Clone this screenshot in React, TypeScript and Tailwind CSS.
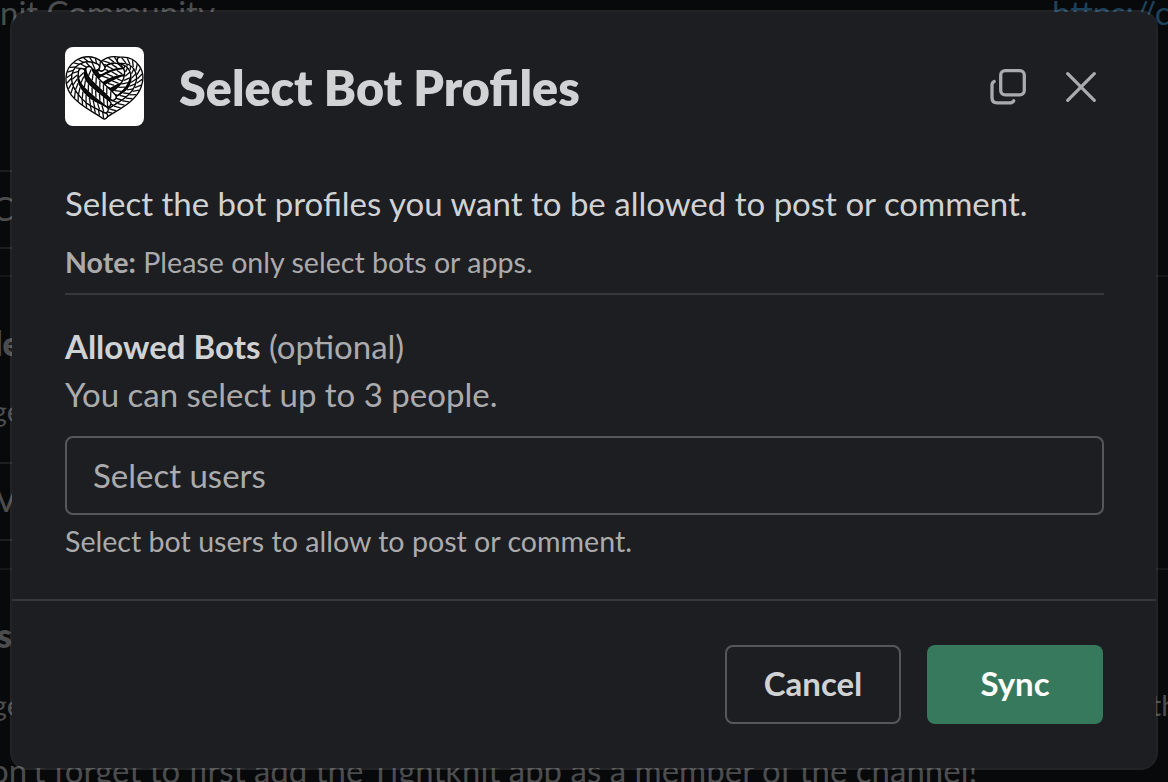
import React from "react";

type Pt = [number, number];

// Each strand is a chain of cubic Bézier control points.
const STRANDS: Pt[][] = [
  [[203, 84], [180, 84], [158, 92], [138, 104]],
  [[203, 104], [185, 106], [160, 114], [140, 128]],
  [[204, 126], [190, 130], [172, 140], [154, 150]],
  [[138, 92], [150, 66], [186, 62], [204, 78], [234, 104], [214, 150], [172, 174]],
  [[206, 74], [244, 88], [244, 134], [224, 160], [206, 182], [176, 190], [150, 212]],
  [[196, 70], [238, 66], [266, 104], [249, 148], [234, 188], [184, 210], [148, 234]],
  [[140, 92], [128, 66], [92, 62], [66, 80], [32, 104], [40, 146], [56, 168], [80, 200], [124, 218], [148, 236]],
  [[124, 90], [96, 76], [66, 88], [60, 114], [54, 146], [84, 178], [102, 192], [120, 204], [136, 210], [150, 218]],
  [[80, 104], [74, 132], [98, 150], [116, 166], [130, 178], [146, 190], [158, 200]],
  [[102, 98], [104, 120], [140, 144], [174, 180]],
];

const STEP = 15;

function sample(pts: Pt[], t: number, seg: number) {
  const [a, b, c, d] = pts.slice(seg * 3, seg * 3 + 4);
  const u = 1 - t;
  const at = (i: 0 | 1) => u * u * u * a[i] + 3 * u * u * t * b[i] + 3 * u * t * t * c[i] + t * t * t * d[i];
  const dt = (i: 0 | 1) => 3 * u * u * (b[i] - a[i]) + 6 * u * t * (c[i] - b[i]) + 3 * t * t * (d[i] - c[i]);
  const dx = dt(0);
  const dy = dt(1);
  const l = Math.hypot(dx, dy) || 1;
  return { x: at(0), y: at(1), tx: dx / l, ty: dy / l };
}

function twists(pts: Pt[]) {
  let out = "";
  let travelled = 6;
  let last: { x: number; y: number } | null = null;
  for (let s = 0; s < (pts.length - 1) / 3; s++) {
    for (let i = 0; i <= 60; i++) {
      const p = sample(pts, i / 60, s);
      if (last) travelled += Math.hypot(p.x - last.x, p.y - last.y);
      last = p;
      if (travelled >= STEP) {
        travelled -= STEP;
        const vx = -p.ty * 7.5 + p.tx * 7;
        const vy = p.tx * 7.5 + p.ty * 7;
        out += `M${p.x + vx} ${p.y + vy}L${p.x - vx} ${p.y - vy}`;
      }
    }
  }
  return out;
}

function toPath(pts: Pt[]) {
  return `M${pts[0].join(" ")}C${pts.slice(1).map((p) => p.join(" ")).join(" ")}`;
}

function RopeHeart() {
  return (
    <svg viewBox="30 30 237 237" className="size-[79px] shrink-0 rounded-lg bg-white" aria-hidden="true">
      <path d="M148 240C90 212 50 160 56 110C66 70 120 60 142 96C170 55 240 70 246 110C250 160 200 205 148 240Z" fill="#111" />
      {STRANDS.map((pts, i) => (
        <g key={i} fill="none">
          <path d={toPath(pts)} stroke="#000" strokeWidth="23" strokeLinecap="round" />
          <path d={toPath(pts)} stroke="#fff" strokeWidth="15" strokeLinecap="round" />
          <path d={twists(pts)} stroke="#111" strokeWidth="4" />
        </g>
      ))}
    </svg>
  );
}

function WindowIcon() {
  return (
    <svg width="36" height="36" viewBox="0 0 36 36" fill="none" stroke="#ababad" strokeWidth="3.3" strokeLinecap="round" aria-hidden="true">
      <rect x="10.7" y="1.7" width="23.6" height="24.1" rx="4.5" />
      <path d="M4.2 12.4C2.6 13.2 2 14.4 2 16V28.5C2 31.8 3.8 33.8 7 33.8H19.5C21.6 33.8 23 33 23.7 31.8" />
    </svg>
  );
}

function CloseIcon() {
  return (
    <svg width="30" height="30" viewBox="0 0 30 30" fill="none" stroke="#ababad" strokeWidth="3.2" strokeLinecap="round" aria-hidden="true">
      <path d="M1.7 1.7L28.3 28.3M28.3 1.7L1.7 28.3" />
    </svg>
  );
}

function Backdrop() {
  return (
    <div className="flex h-full flex-col whitespace-nowrap text-[33px] leading-[40px] text-[#4b4c4d]" aria-hidden="true">
      <div className="flex h-[170px] justify-between">
        <span className="-mt-[8px]">nit Community</span>
        <span className="-mt-[8px] w-[116px] text-[#1d425d]">https://community</span>
      </div>
      <div className="h-[79px] w-[200px] border-y-2 border-[#1d1e20] pt-[16px]">
        <span className="-ml-[8px]">C</span>
      </div>
      <div className="mt-[26px] h-[187px] border-t-2 border-[#151618] pt-[46px]">
        <div className="-ml-[6px] font-extrabold">le</div>
        <div className="-ml-[8px] mt-[28px] text-[28.6px]">ge</div>
      </div>
      <div className="h-[79px] w-[200px] border-y-2 border-[#1d1e20] pt-[15px]">
        <span className="-ml-[5px]">V</span>
      </div>
      <div className="mt-[27px] h-[214px] border-t-2 border-[#151618] pt-[45px]">
        <div className="-ml-[3px] font-extrabold">s</div>
        <div className="mt-[30px] flex justify-between text-[28.6px]">
          <span className="-ml-[8px]">ge</span>
          <span className="w-[17px]">the</span>
        </div>
        <div className="-ml-[10px] mt-[25px]">
          on't forget to first add the Tightknit app as a member of the channel!
        </div>
      </div>
    </div>
  );
}

export default function App() {
  return (
    <div className="relative h-[782px] w-[1168px] overflow-hidden bg-[#08090b] font-['Lato',sans-serif]">
      <Backdrop />
      <section
        role="dialog"
        className="absolute left-[10px] top-[10px] flex h-[760px] w-[1148px] flex-col rounded-[18px] border-2 border-[#e8e8e8]/12 bg-[#1d1e22] bg-clip-padding text-[#d1d2d3]"
      >
        <header className="flex h-[150px] items-start pl-[53px] pr-[60px] pt-[35px]">
          <RopeHeart />
          <h1 className="ml-[35px] mt-[10px] flex-1 text-[48.4px] font-extrabold leading-[60px]">Select Bot Profiles</h1>
          <div className="mt-[22px] flex items-center gap-[40px]">
            <WindowIcon />
            <CloseIcon />
          </div>
        </header>

        <div className="flex h-[437px] flex-col pl-[53px] pr-[52px] pt-[21px]">
          <p className="text-[33px] leading-[40px]">Select the bot profiles you want to be allowed to post or comment.</p>
          <p className="mt-[19px] text-[28.6px] leading-[40px] text-[#ababad]">
            <b className="font-bold">Note:</b> Please only select bots or apps.
          </p>
          <hr className="mt-[11px] border-t-2 border-[#35373b]" />
          <label className="mt-[31px] text-[33px] leading-[40px]">
            <b className="font-bold">Allowed Bots</b> <span className="text-[#ababad]">(optional)</span>
          </label>
          <p className="mt-[8px] text-[33px] leading-[40px] text-[#ababad]">You can select up to 3 people.</p>
          <div className="mt-[22px] flex h-[79px] items-center rounded-lg border-2 border-[#565759] pl-[26px] text-[33px] text-[#ababad]">
            Select users
          </div>
          <p className="mt-[6px] text-[28.6px] leading-[40px] text-[#ababad]">Select bot users to allow to post or comment.</p>
        </div>

        <footer className="flex flex-1 justify-end gap-[26px] border-t-2 border-[#35373b] pr-[53px] pt-[44px] text-[33px] font-bold">
          <button className="h-[79px] w-[176px] rounded-lg border-2 border-[#565759] pb-[2px]">Cancel</button>
          <button className="h-[79px] w-[176px] rounded-lg bg-[#37795d] pb-[2px] text-white">Sync</button>
        </footer>
      </section>
    </div>
  );
}
